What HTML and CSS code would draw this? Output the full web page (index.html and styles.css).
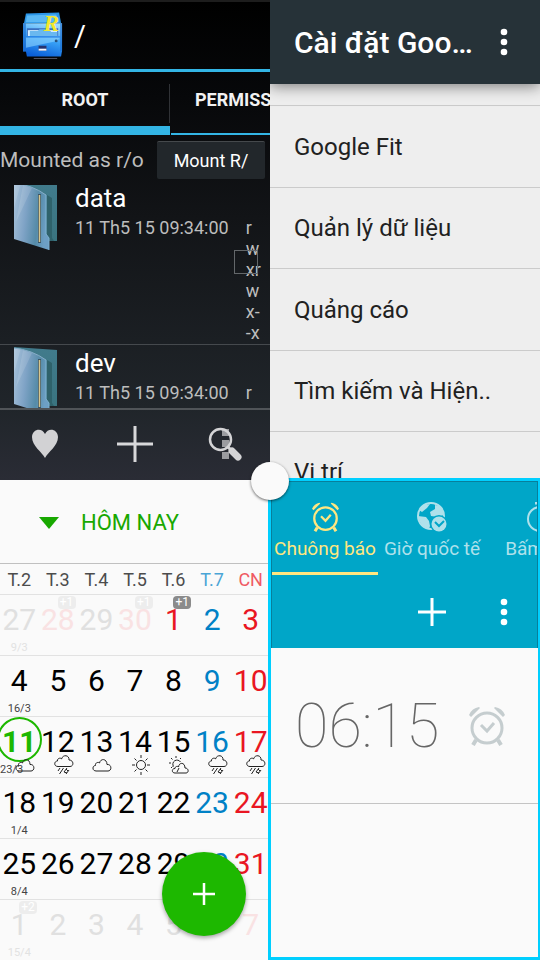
FILE: index.html
```html
<!DOCTYPE html>
<html lang="vi">
<head>
<meta charset="utf-8">
<meta name="viewport" content="width=device-width, initial-scale=1">
<title>Multi window</title>
<link rel="stylesheet" href="styles.css">
</head>
<body>
<svg class="defs" aria-hidden="true">
  <defs>
    <linearGradient id="folder-front" x1="0" y1="0" x2="1" y2="0.2">
      <stop offset="0" stop-color="#a9c3da"/><stop offset="0.4" stop-color="#7fa3c6"/><stop offset="0.75" stop-color="#558ba8"/><stop offset="1" stop-color="#6d9fc4"/>
    </linearGradient>
    <linearGradient id="folder-back" x1="0" y1="0" x2="0" y2="1">
      <stop offset="0" stop-color="#417b8c"/><stop offset="1" stop-color="#3a7480"/>
    </linearGradient>
    <linearGradient id="cabinet" x1="0.7" y1="0" x2="0.4" y2="1">
      <stop offset="0" stop-color="#9fdcff"/><stop offset="0.5" stop-color="#37a0f6"/><stop offset="1" stop-color="#0b5fd8"/>
    </linearGradient>
    <symbol id="folder" viewBox="0 0 50 70">
      <path d="M0 0 43 3v56H32z" fill="url(#folder-back)"/>
      <path d="M33 13l5 3v40l2 3H33z" fill="#2f626b"/>
      <path d="M0 1Q18 3 32 13V52l3 4v12L0 57z" fill="url(#folder-front)"/>
      <path d="M0 1h7L0 26zM9 3l9 3L2 40z" fill="#fff" opacity=".13"/>
      <path d="M32 13V52l3 4v12" fill="none" stroke="#7fb0cf"/>
      <path d="M0 1Q18 3 32 13" fill="none" stroke="#86adc8"/>
      <path d="M25.500 12v49" stroke="#3b5566" stroke-width="3"/>
      <path d="M25.500 13v47" stroke="#d6c68e" stroke-width="1.500"/>
    </symbol>
    <symbol id="alarm" viewBox="0 0 36 40">
      <g fill="none" stroke="currentColor">
        <circle cx="18" cy="22" r="15" stroke-width="3"/>
        <path d="M12 19l6 6 7-8" stroke-width="3"/>
        <path d="M7 34l-3 5M29 34l3 5" stroke-width="4"/>
      </g>
      <path d="M0 9Q3 2 10 1l1 1L2 11zM36 9Q33 2 26 1l-1 1 9 9z" fill="currentColor"/>
    </symbol>
    <symbol id="cloud" viewBox="0 0 20 20">
      <path d="M4 16C0 16 0 10.500 3.500 10.500 3 7 7 7 7.500 8 8.500 3 15 3.500 15 9.500 20 9 20 16 16 16z" fill="none" stroke="#222"/>
    </symbol>
    <symbol id="rain" viewBox="0 0 20 20">
      <path d="M4 11.500C-.5 11.500 0 6 3.500 6 3 3 7 2.500 7.500 4 9-1 15.500 0 15 5 20 5 20 11.500 16 11.500z" fill="none" stroke="#222"/>
      <path d="M6 13l-2 3M9.500 13l-4 6M13 13l-3 4M15 15l-3 4M12 14l2 2M10 17l3 1" stroke="#222"/>
    </symbol>
    <symbol id="sun" viewBox="0 0 20 20">
      <circle cx="10" cy="10" r="4.500" fill="none" stroke="#222"/>
      <path d="M10 0v3M10 17v3M1 10h3M16 10h3M3.500 3.500l2 2M14.500 14.500l2 2M3.500 16.500l2-2M14.500 5.500l2-2" stroke="#222"/>
    </symbol>
    <symbol id="partly" viewBox="0 0 20 20">
      <path d="M4.500 11.500A4 4 0 1 1 11.500 7M7 1v2M0 8h2M2 3l1.500 1.500M12 3l-1 1M2 13l1.500-1.500" fill="none" stroke="#222"/>
      <path d="M6 18C2 18 3 13 6 13.500 6 11 9 11 9.500 12 10 7 16 7 16 13 20 13 20 18 17 18zM8 17l2-4" fill="none" stroke="#222"/>
    </symbol>
    <symbol id="dots" viewBox="0 0 8 28">
      <g fill="#fff"><circle cx="4" cy="4" r="3.300"/><circle cx="4" cy="14" r="3.300"/><circle cx="4" cy="24" r="3.300"/></g>
    </symbol>
  </defs>
</svg>

<main class="screen">
  <section class="pane explorer">
    <header class="explorer-head">
      <svg class="app-logo" viewBox="0 0 42 48" aria-hidden="true">
        <path d="M3 1 37 0l2 11H1z" fill="#2b96e8"/>
        <path d="M4 3l30-1 3 8H3z" fill="#5ab8f5"/>
        <path d="M0 11h40v28l-1 6H4l-1-5H0z" fill="url(#cabinet)"/>
        <path d="M0 11h3v29H0zM38 11h2v28l-2 1z" fill="#1d6fd0" opacity=".7"/>
        <path d="M4 16h32v8H4z" fill="#3a6fc0"/>
        <path d="M5 18h30v6H5z" fill="#d5efff"/>
        <path d="M7 19h8l2-2h10l2 3h6v4H7z" fill="#6ab8ef"/>
        <path d="M3 25h35l-3 4-32 7z" fill="#8fd6ff" opacity=".6"/>
        <path d="M3 25h35" stroke="#1a72dd"/>
        <path d="M16 34h8v5h-8z" fill="#25336f"/><path d="M16 37h8v2h-8z" fill="#f4f8ff"/>
        <circle cx="34" cy="29" r="1.500" fill="#27507c"/>
        <path d="M11 47h24" stroke="#56586a"/>
        <text class="logo-letter" x="21" y="19">R</text>
      </svg>
      <h1 class="path">/</h1>
    </header>
    <nav class="explorer-tabs">
      <button class="tab tab-active">ROOT</button>
      <button class="tab">PERMISSIONS</button>
    </nav>
    <div class="mount">
      <span>Mounted as r/o</span>
      <button class="mount-button">Mount R/</button>
    </div>
    <ul class="files">
      <li class="file">
        <svg class="folder" aria-hidden="true"><use href="#folder"/></svg>
        <div class="file-info"><h2>data</h2><div class="file-meta"><span>11 Th5 15 09:34:00</span><span class="perm">r<br>w<br>xr<br>w<br>x-<br>-x</span></div></div>
        <input class="pick" type="checkbox" aria-label="data">
      </li>
      <li class="file">
        <svg class="folder" aria-hidden="true"><use href="#folder"/></svg>
        <div class="file-info"><h2>dev</h2><div class="file-meta"><span>11 Th5 15 09:34:00</span><span class="perm">r</span></div></div>
      </li>
    </ul>
    <footer class="toolbar">
      <button aria-label="Bookmarks"><svg width="28" height="30" viewBox="0 0 28 30"><path d="M14 29C11 23 1 17 1 8 1 0 11-2 14 5 17-2 27 0 27 8 27 17 17 23 14 29z" fill="#d2d2d4"/></svg></button>
      <button aria-label="Add"><svg width="36" height="36" viewBox="0 0 36 36"><path d="M18 0v36M0 18h36" stroke="#d8d8da" stroke-width="3"/></svg></button>
      <button aria-label="Search"><svg width="34" height="34" viewBox="0 0 34 34"><path d="M14 2h7v7h-7zM14 13h7v7h-7zM14 25h7v7h-7z" fill="#9b9ca0"/><circle cx="12.500" cy="12.500" r="10.500" fill="none" stroke="#d4d4d6" stroke-width="2.500"/><path d="M20 20l3 3" stroke="#d4d4d6" stroke-width="3"/><path d="M24 24l6 6" stroke="#d4d4d6" stroke-width="7" stroke-linecap="round"/></svg></button>
    </footer>
  </section>

  <section class="pane settings">
    <header class="settings-head">
      <h1>Cài đặt Google</h1>
      <button class="more" aria-label="More"><svg width="8" height="28"><use href="#dots"/></svg></button>
    </header>
    <ul class="settings-list">
      <li></li>
      <li><a href="#">Google Fit</a></li>
      <li><a href="#">Quản lý dữ liệu</a></li>
      <li><a href="#">Quảng cáo</a></li>
      <li><a href="#">Tìm kiếm và Hiện..</a></li>
      <li><a href="#">Vị trí</a></li>
    </ul>
  </section>

  <section class="pane calendar">
    <header class="calendar-head">
      <svg width="20" height="12" viewBox="0 0 20 12" aria-hidden="true"><path d="M0 0h20L10 12z" fill="#18a800"/></svg>
      <button class="today-button">HÔM NAY</button>
    </header>
    <table class="month">
      <thead><tr><th>T.2</th><th>T.3</th><th>T.4</th><th>T.5</th><th>T.6</th><th class="sat">T.7</th><th class="sun">CN</th></tr></thead>
      <tbody>
        <tr>
          <td class="out">27<small>9/3</small></td><td class="out sun">28<i class="badge">+1</i></td><td class="out">29</td><td class="out sun">30<i class="badge">+1</i></td><td class="sun">1<i class="badge">+1</i></td><td class="sat">2</td><td class="sun">3</td>
        </tr>
        <tr><td>4<small>16/3</small></td><td>5</td><td>6</td><td>7</td><td>8</td><td class="sat">9</td><td class="sun">10</td></tr>
        <tr>
          <td class="today"><span>11</span><small>23/3</small><svg class="weather"><use href="#cloud"/></svg></td>
          <td>12<svg class="weather"><use href="#rain"/></svg></td>
          <td>13<svg class="weather"><use href="#cloud"/></svg></td>
          <td>14<svg class="weather"><use href="#sun"/></svg></td>
          <td>15<svg class="weather"><use href="#partly"/></svg></td>
          <td class="sat">16<svg class="weather"><use href="#rain"/></svg></td>
          <td class="sun">17<svg class="weather"><use href="#rain"/></svg></td>
        </tr>
        <tr><td>18<small>1/4</small></td><td>19</td><td>20</td><td>21</td><td>22</td><td class="sat">23</td><td class="sun">24</td></tr>
        <tr><td>25<small>8/4</small></td><td>26</td><td>27</td><td>28</td><td>29</td><td class="sat">30</td><td class="sun">31</td></tr>
        <tr class="last"><td class="out">1<small>15/4</small><i class="badge">+2</i></td><td class="out">2</td><td class="out">3</td><td class="out">4</td><td class="out">5</td><td class="out">6</td><td class="out sun">7</td></tr>
      </tbody>
    </table>
    <button class="fab" aria-label="Add event"><svg width="22" height="22" viewBox="0 0 22 22"><path d="M11 0v22M0 11h22" stroke="#fff" stroke-width="2.500"/></svg></button>
  </section>

  <section class="pane clock">
    <div class="clock-head">
      <nav class="clock-tabs">
        <button class="clock-tab clock-tab-active"><svg width="27" height="30"><use href="#alarm"/></svg><span>Chuông báo</span></button>
        <button class="clock-tab"><svg width="30" height="30" viewBox="0 0 30 30"><circle cx="14" cy="14" r="13" fill="none" stroke="currentColor" stroke-width="2"/><path d="M1 14l8 1 3 4 1 5-1 3Q3 25 1 14zM18 3l5 1 4 6 0 3-6 2-7-1-1-4 5-3zM2 8l5-5 6-1-3 4-5 4z" fill="currentColor"/><circle cx="22" cy="22" r="9" fill="#00a6c8"/><circle cx="22" cy="22" r="7.500" fill="currentColor"/><path d="M18 20l4 4 5-5" fill="none" stroke="#00a6c8" stroke-width="2"/></svg><span>Giờ quốc tế</span></button>
        <button class="clock-tab"><svg width="28" height="30" viewBox="0 0 28 30"><circle cx="14" cy="17" r="12" fill="none" stroke="currentColor" stroke-width="2"/><path d="M9 1h10M14 1v4M14 10v7" stroke="currentColor" stroke-width="3"/></svg><span>Bấm giờ</span></button>
      </nav>
      <div class="clock-actions">
        <button aria-label="Add alarm"><svg width="28" height="28" viewBox="0 0 28 28"><path d="M14 0v28M0 14h28" stroke="#fff" stroke-width="3"/></svg></button>
        <button aria-label="More"><svg width="8" height="28"><use href="#dots"/></svg></button>
      </div>
    </div>
    <div class="alarm"><time>06:15</time><svg class="alarm-icon" width="36" height="40"><use href="#alarm"/></svg></div>
  </section>
  <button class="handle" aria-label="Resize windows"></button>
</main>
</body>
</html>
```
FILE: styles.css
```css
*, *::before { box-sizing: border-box; margin: 0; padding: 0; }
body { font-family: Roboto, "Noto Sans", sans-serif; background: #fafafa; }
button { font: inherit; color: inherit; background: none; border: 0; }
a { color: inherit; text-decoration: none; }
ul { list-style: none; }
svg { display: block; flex: none; }
.defs { position: absolute; width: 0; height: 0; }

.screen {
  position: relative;
  display: grid;
  grid-template: minmax(0, 1fr) minmax(0, 1fr) / minmax(0, 1fr) minmax(0, 1fr);
  height: 100vh;
  overflow: hidden;
}
.pane { position: relative; display: flex; flex-direction: column; min-width: 0; overflow: hidden; }

/* File explorer */
.explorer {
  color: #fff;
  background: linear-gradient(#000 0%, #07080a 20%, #121417 45%, #20252a 85%, #2a2c35 100%);
  border-top: 2px solid #1d1d1d;
}
.explorer-head { display: flex; align-items: center; gap: 10px; height: 70px; padding-left: 23px; border-bottom: 3px solid #33b5e5; }
.app-logo { width: 41px; height: 48px; overflow: visible; }
.logo-letter { font: italic 700 24px "Liberation Serif", serif; fill: #f5e72b; }
.path { font-size: 29px; font-weight: 400; }
.explorer-tabs { display: flex; gap: 1px; height: 63px; }
.tab { flex: none; padding: 0 24px 6px; font-size: 18px; font-weight: 700; color: #f2f2f2; border-bottom: 2px solid #33b5e5; }
.tab-active { width: 170px; padding-bottom: 0; border-bottom-width: 9px; background: linear-gradient(#303236, #303236) right 12px / 1px 39px no-repeat; }
.mount { display: flex; align-items: center; justify-content: space-between; height: 50px; padding: 0 5px 0 0; color: #bdbdbd; font-size: 21px; }
.mount-button { width: 108px; height: 38px; color: #fff; font-size: 18px; background: #22272b; border-top: 1px solid #45494c; border-radius: 2px; }
.files { flex: 1; min-height: 0; overflow: hidden; }
.file { display: flex; height: 165px; padding: 2px 0 0 14px; border-bottom: 1px solid #45494d; position: relative; }
.file:first-child { margin-top: -5px; }
.folder { width: 50px; height: 70px; }
.file-info { margin: 1px 0 0 11px; flex: 1; }
.file-info h2 { font-size: 26px; font-weight: 400; line-height: 30px; }
.file-meta { display: flex; gap: 17px; color: #bdbdbd; font-size: 18px; line-height: 21px; margin-top: 4px; }
.pick { position: absolute; right: 12px; top: 70px; width: 24px; height: 24px; appearance: none; border: 1px solid #63676a; }
.toolbar { display: grid; grid-template-columns: repeat(3, 1fr); height: 72px; padding-bottom: 2px; border-top: 2px solid #505458; }
.toolbar button { display: grid; place-items: center; }

/* Settings */
.settings { background: #eee; color: #212121; }
.settings-head { display: flex; align-items: center; justify-content: space-between; height: 84px; padding: 0 32px 0 24px; color: #fff; background: #263238; box-shadow: 0 2px 14px rgba(0, 0, 0, .5); z-index: 1; }
.settings-head h1 { flex: 1; max-width: 180px; font-size: 30px; font-weight: 500; white-space: nowrap; overflow: hidden; text-overflow: ellipsis; }
.settings-list { flex: 1; display: grid; grid-template-rows: 22px repeat(4, minmax(0, 1fr)) 48px; overflow: hidden; }
.settings-list li { display: flex; align-items: center; padding: 1px 0 0 24px; font-size: 24px; border-bottom: 1px solid #cbcbcb; }
.settings-list li:last-child { align-items: flex-start; padding-top: 26px; border: 0; }

/* Calendar */
.calendar { background: #fafafa; }
.calendar-head { display: flex; align-items: center; gap: 22px; height: 85px; padding: 2px 0 0 39px; color: #18a800; font-size: 22px; border-bottom: 1px solid #c0c0c0; }
.month { width: 100%; flex: 1; table-layout: fixed; border-collapse: collapse; }
.month th { height: 30px; padding-top: 2px; font-size: 18px; font-weight: 400; color: #4c4c4c; }
.month tr { border-bottom: 1px solid #e2e2e2; }
.month .last { border: 0; }
.month td { position: relative; height: 61px; padding-top: 7px; vertical-align: top; text-align: center; font-size: 30px; line-height: 35px; color: #000; }
.month th.sat { color: #4aa5d6; }
.month th.sun { color: #ef5a64; }
.month td.sat { color: #0081c6; }
.month td.sun { color: #e91622; }
.month td.out { color: #e0e0e0; }
.month td.out.sun { color: #f9e2e3; }
.month small { position: absolute; left: 0; right: 0; bottom: 0; font-size: 11px; line-height: 14px; color: #444; }
.month .out small { color: #e2e2e2; }
.badge { position: absolute; left: 19px; top: 1px; width: 18px; height: 13px; font-size: 12px; line-height: 13px; font-style: normal; color: #fff; background: #8b8b8b; border-radius: 4px; }
.out .badge { background: #ededed; }
.weather { position: absolute; left: 15px; bottom: 2px; width: 20px; height: 20px; }
.month .today { color: #1db800; font-weight: 700; }
.today::before { content: ""; position: absolute; left: -3px; top: 0; width: 45px; height: 45px; border: 2px solid #1db800; border-radius: 50%; }
.month .today small { right: auto; font-weight: 400; }
.fab { position: absolute; right: 24px; bottom: 24px; display: grid; place-items: center; width: 84px; height: 84px; border-radius: 50%; background: #1db800; box-shadow: 0 2px 4px rgba(0, 0, 0, .35); }

/* Clock */
.clock { margin: -2px 0 0 -2px; background: #fafafa; border: 3px solid #00cfff; border-right-width: 2px; }
.clock-head { height: 167px; background: #00a6c8; border: 1px solid #087f9b; border-bottom: 0; }
.clock-tabs { display: flex; overflow: hidden; color: #afe1eb; }
.clock-tab { flex: none; display: flex; flex-direction: column; align-items: center; gap: 5px; width: 108px; height: 93px; padding-top: 20px; font-size: 19px; line-height: 24px; white-space: nowrap; }
.clock-tab-active { width: 106px; color: #ffe680; border-bottom: 3px solid #ffe680; }
.clock-actions { display: flex; align-items: center; justify-content: flex-end; gap: 54px; height: 74px; padding-right: 29px; }
.alarm { display: flex; align-items: center; justify-content: space-between; height: 156px; padding: 0 33px 0 24px; border-bottom: 1px solid #c4c4c4; color: #c5cdcf; }
.alarm time { font-size: 61px; font-weight: 100; color: #666; }

.handle { position: absolute; left: 50%; top: 50%; width: 38px; height: 38px; margin: -18px 0 0 -19px; border-radius: 50%; background: #fafafa; box-shadow: 0 1px 3px rgba(0, 0, 0, .6); }
```
